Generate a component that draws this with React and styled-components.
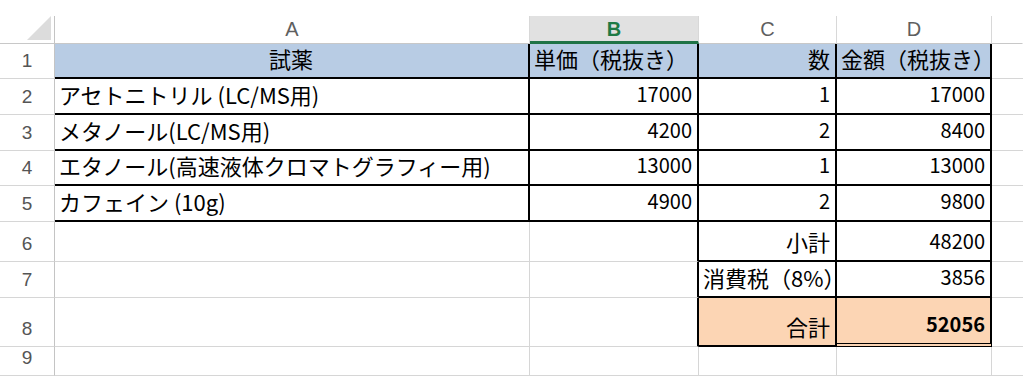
import React from "react";
import styled, { createGlobalStyle } from "styled-components";

const GlobalStyle = createGlobalStyle`
  html, body {
    margin: 0;
    padding: 0;
    background: #fff;
    overflow: hidden;
  }
`;

const GRID = "#d6d6d6";
const BLACK = "#000";

const Sheet = styled.div`
  display: grid;
  grid-template-columns: 55px 475px 169px 138px 155px 1fr;
  grid-template-rows: 28px 35px 36px 36px 35px 36px 40px 36px 49px 29px;
  padding-top: 16px;
  width: 1023px;
  font-family: "Noto Sans CJK JP", "Noto Sans", sans-serif;
  color: #000;
`;

const Corner = styled.div`
  position: relative;
  border-right: 1px solid #c4c4c4;
  border-bottom: 1px solid #c8c8c8;
  box-sizing: border-box;

  &::after {
    content: "";
    position: absolute;
    right: 3px;
    bottom: 3px;
    width: 24px;
    height: 24px;
    background: #dcdcdc;
    clip-path: polygon(100% 0, 100% 100%, 0 100%);
  }
`;

const ColHead = styled.div`
  display: flex;
  align-items: center;
  justify-content: center;
  box-sizing: border-box;
  font-family: "Liberation Sans", Arial, sans-serif;
  font-size: 20px;
  color: ${(p) => (p.$active ? "#1e7a45" : "#5f5f5f")};
  font-weight: ${(p) => (p.$active ? 700 : 400)};
  background: ${(p) => (p.$active ? "#e1e1e1" : "#fff")};
  border-right: 1px solid ${(p) => (p.$last ? "transparent" : "#d8d8d8")};
  border-bottom: ${(p) => (p.$active ? "3px solid #1f7346" : "1px solid #c8c8c8")};
  padding-top: ${(p) => (p.$active ? "2px" : "0")};
`;

const RowHead = styled.div`
  display: flex;
  align-items: flex-end;
  justify-content: center;
  box-sizing: border-box;
  padding-bottom: 6px;
  font-family: "Liberation Sans", Arial, sans-serif;
  font-size: 19px;
  line-height: 22px;
  color: #555;
  border-right: 1px solid #c4c4c4;
  border-bottom: 1px solid ${GRID};
`;

const borderFor = (kind) => {
  if (kind === "black") return `2px solid ${BLACK}`;
  if (kind === "double") return `4px double ${BLACK}`;
  if (kind === "none") return "none";
  return `1px solid ${GRID}`;
};

const Cell = styled.div`
  display: flex;
  align-items: flex-end;
  justify-content: ${(p) =>
    p.$align === "right" ? "flex-end" : p.$align === "center" ? "center" : "flex-start"};
  box-sizing: border-box;
  padding: 0 5px 6px 4px;
  white-space: nowrap;
  overflow: visible;
  font-size: ${(p) => (p.$num ? "20px" : "22px")};
  line-height: 26px;
  font-weight: ${(p) => (p.$bold ? 700 : 400)};
  background: ${(p) => p.$bg || "transparent"};
  border-right: ${(p) => borderFor(p.$right)};
  border-bottom: ${(p) => borderFor(p.$bottom)};
`;

const BLUE = "#b8cce4";
const PEACH = "#fcd5b4";

const rows = [
  [
    { t: "試薬", a: "center" },
    { t: "単価（税抜き）" },
    { t: "数", a: "right" },
    { t: "金額（税抜き）" },
  ],
  [
    { t: "アセトニトリル (LC/MS用)" },
    { t: "17000", n: true },
    { t: "1", n: true },
    { t: "17000", n: true },
  ],
  [
    { t: "メタノール(LC/MS用)" },
    { t: "4200", n: true },
    { t: "2", n: true },
    { t: "8400", n: true },
  ],
  [
    { t: "エタノール(高速液体クロマトグラフィー用)" },
    { t: "13000", n: true },
    { t: "1", n: true },
    { t: "13000", n: true },
  ],
  [
    { t: "カフェイン (10g)" },
    { t: "4900", n: true },
    { t: "2", n: true },
    { t: "9800", n: true },
  ],
  [{ t: "" }, { t: "" }, { t: "小計", a: "right" }, { t: "48200", n: true }],
  [{ t: "" }, { t: "" }, { t: "消費税（8%）" }, { t: "3856", n: true }],
  [{ t: "" }, { t: "" }, { t: "合計", a: "right" }, { t: "52056", n: true, b: true }],
  [{ t: "" }, { t: "" }, { t: "" }, { t: "" }],
];

const edges = (r, c) => {
  // r: 1..9, c: 0..3 (A..D)
  let right = "grid";
  let bottom = "grid";
  if (r <= 5) {
    right = "black";
    bottom = "black";
  } else if (r <= 8) {
    if (c >= 1) right = "black";
    if (c >= 2) bottom = "black";
    if (r === 8 && c === 3) bottom = "double";
  }
  return { right, bottom };
};

const fillFor = (r, c) => {
  if (r === 1) return BLUE;
  if (r === 8 && c >= 2) return PEACH;
  return undefined;
};

export default function App() {
  return (
    <>
      <GlobalStyle />
      <Sheet>
        <Corner />
        <ColHead>A</ColHead>
        <ColHead $active>B</ColHead>
        <ColHead>C</ColHead>
        <ColHead>D</ColHead>
        <ColHead $last />
        {rows.map((row, i) => {
          const r = i + 1;
          return (
            <React.Fragment key={r}>
              <RowHead>{r}</RowHead>
              {row.map((cell, c) => {
                const { right, bottom } = edges(r, c);
                return (
                  <Cell
                    key={c}
                    $align={cell.a || (cell.n ? "right" : "left")}
                    $num={cell.n}
                    $bold={cell.b}
                    $bg={fillFor(r, c)}
                    $right={right}
                    $bottom={bottom}
                  >
                    {cell.t}
                  </Cell>
                );
              })}
              <Cell $right="none" $bottom="grid" />
            </React.Fragment>
          );
        })}
      </Sheet>
    </>
  );
}
